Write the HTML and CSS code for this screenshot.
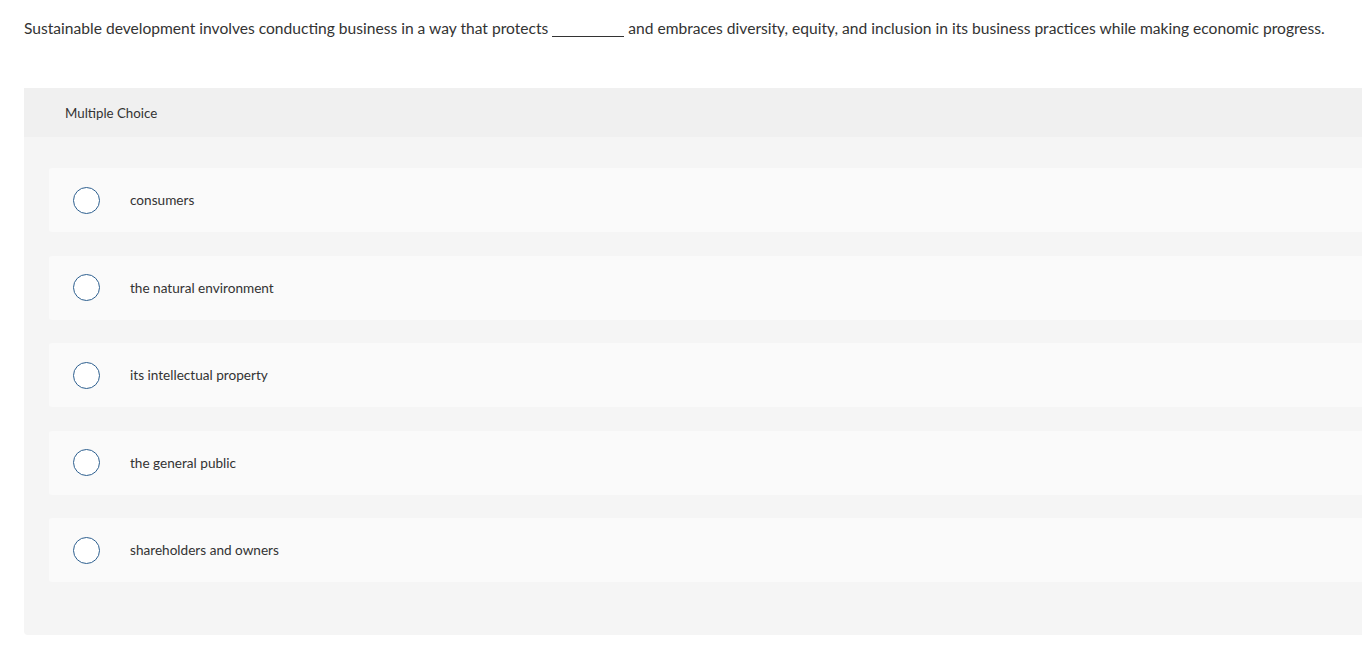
FILE: index.html
```html
<!DOCTYPE html>
<html>
<head>
<meta charset="utf-8">
<link rel="stylesheet" href="styles.css">
</head>
<body>
<div class="page">
  <p class="prompt">Sustainable development involves conducting business in a way that protects <span class="blank"></span> and embraces diversity, equity, and inclusion in its business practices while making economic progress.</p>
  <section class="question">
    <header class="q-head">Multiple Choice</header>
    <div class="choices">
      <label class="choice"><span class="radio"></span><span class="c-text">consumers</span></label>
      <label class="choice"><span class="radio"></span><span class="c-text">the natural environment</span></label>
      <label class="choice"><span class="radio"></span><span class="c-text">its intellectual property</span></label>
      <label class="choice"><span class="radio"></span><span class="c-text">the general public</span></label>
      <label class="choice"><span class="radio"></span><span class="c-text">shareholders and owners</span></label>
    </div>
  </section>
</div>
</body>
</html>
```
FILE: styles.css
```css
html, body {
  margin: 0;
  padding: 0;
  background: #fff;
  overflow: hidden;
}
body {
  font-family: Lato, "Liberation Sans", sans-serif;
  color: #333;
}
.page {
  padding: 17px 0 0 24px;
  width: 1400px;
}
.prompt {
  margin: 0;
  font-size: 15.6px;
  line-height: 22px;
  color: #333;
  white-space: nowrap;
}
.blank {
  display: inline-block;
  width: 72px;
  border-bottom: 1px solid #333;
  vertical-align: -3px;
}
.question {
  margin-top: 49px;
  background: #f5f5f5;
  border-radius: 0 0 4px 4px;
  padding-bottom: 53px;
}
.q-head {
  background: #f0f0f0;
  height: 49px;
  display: flex;
  align-items: center;
  padding-left: 41px;
  font-size: 13.3px;
  color: #333;
}
.choices {
  padding: 31px 0 0 25px;
  display: flex;
  flex-direction: column;
  gap: 23.5px;
}
.choice {
  display: flex;
  align-items: center;
  height: 64px;
  background: #fafafa;
  border-radius: 3px;
  padding-left: 24px;
}
.radio {
  width: 25px;
  height: 25px;
  border: 1.5px solid #2d5f8f;
  border-radius: 50%;
  background: #fff;
  flex: none;
}
.c-text {
  margin-left: 30px;
  font-size: 13.6px;
  color: #333;
}
```
